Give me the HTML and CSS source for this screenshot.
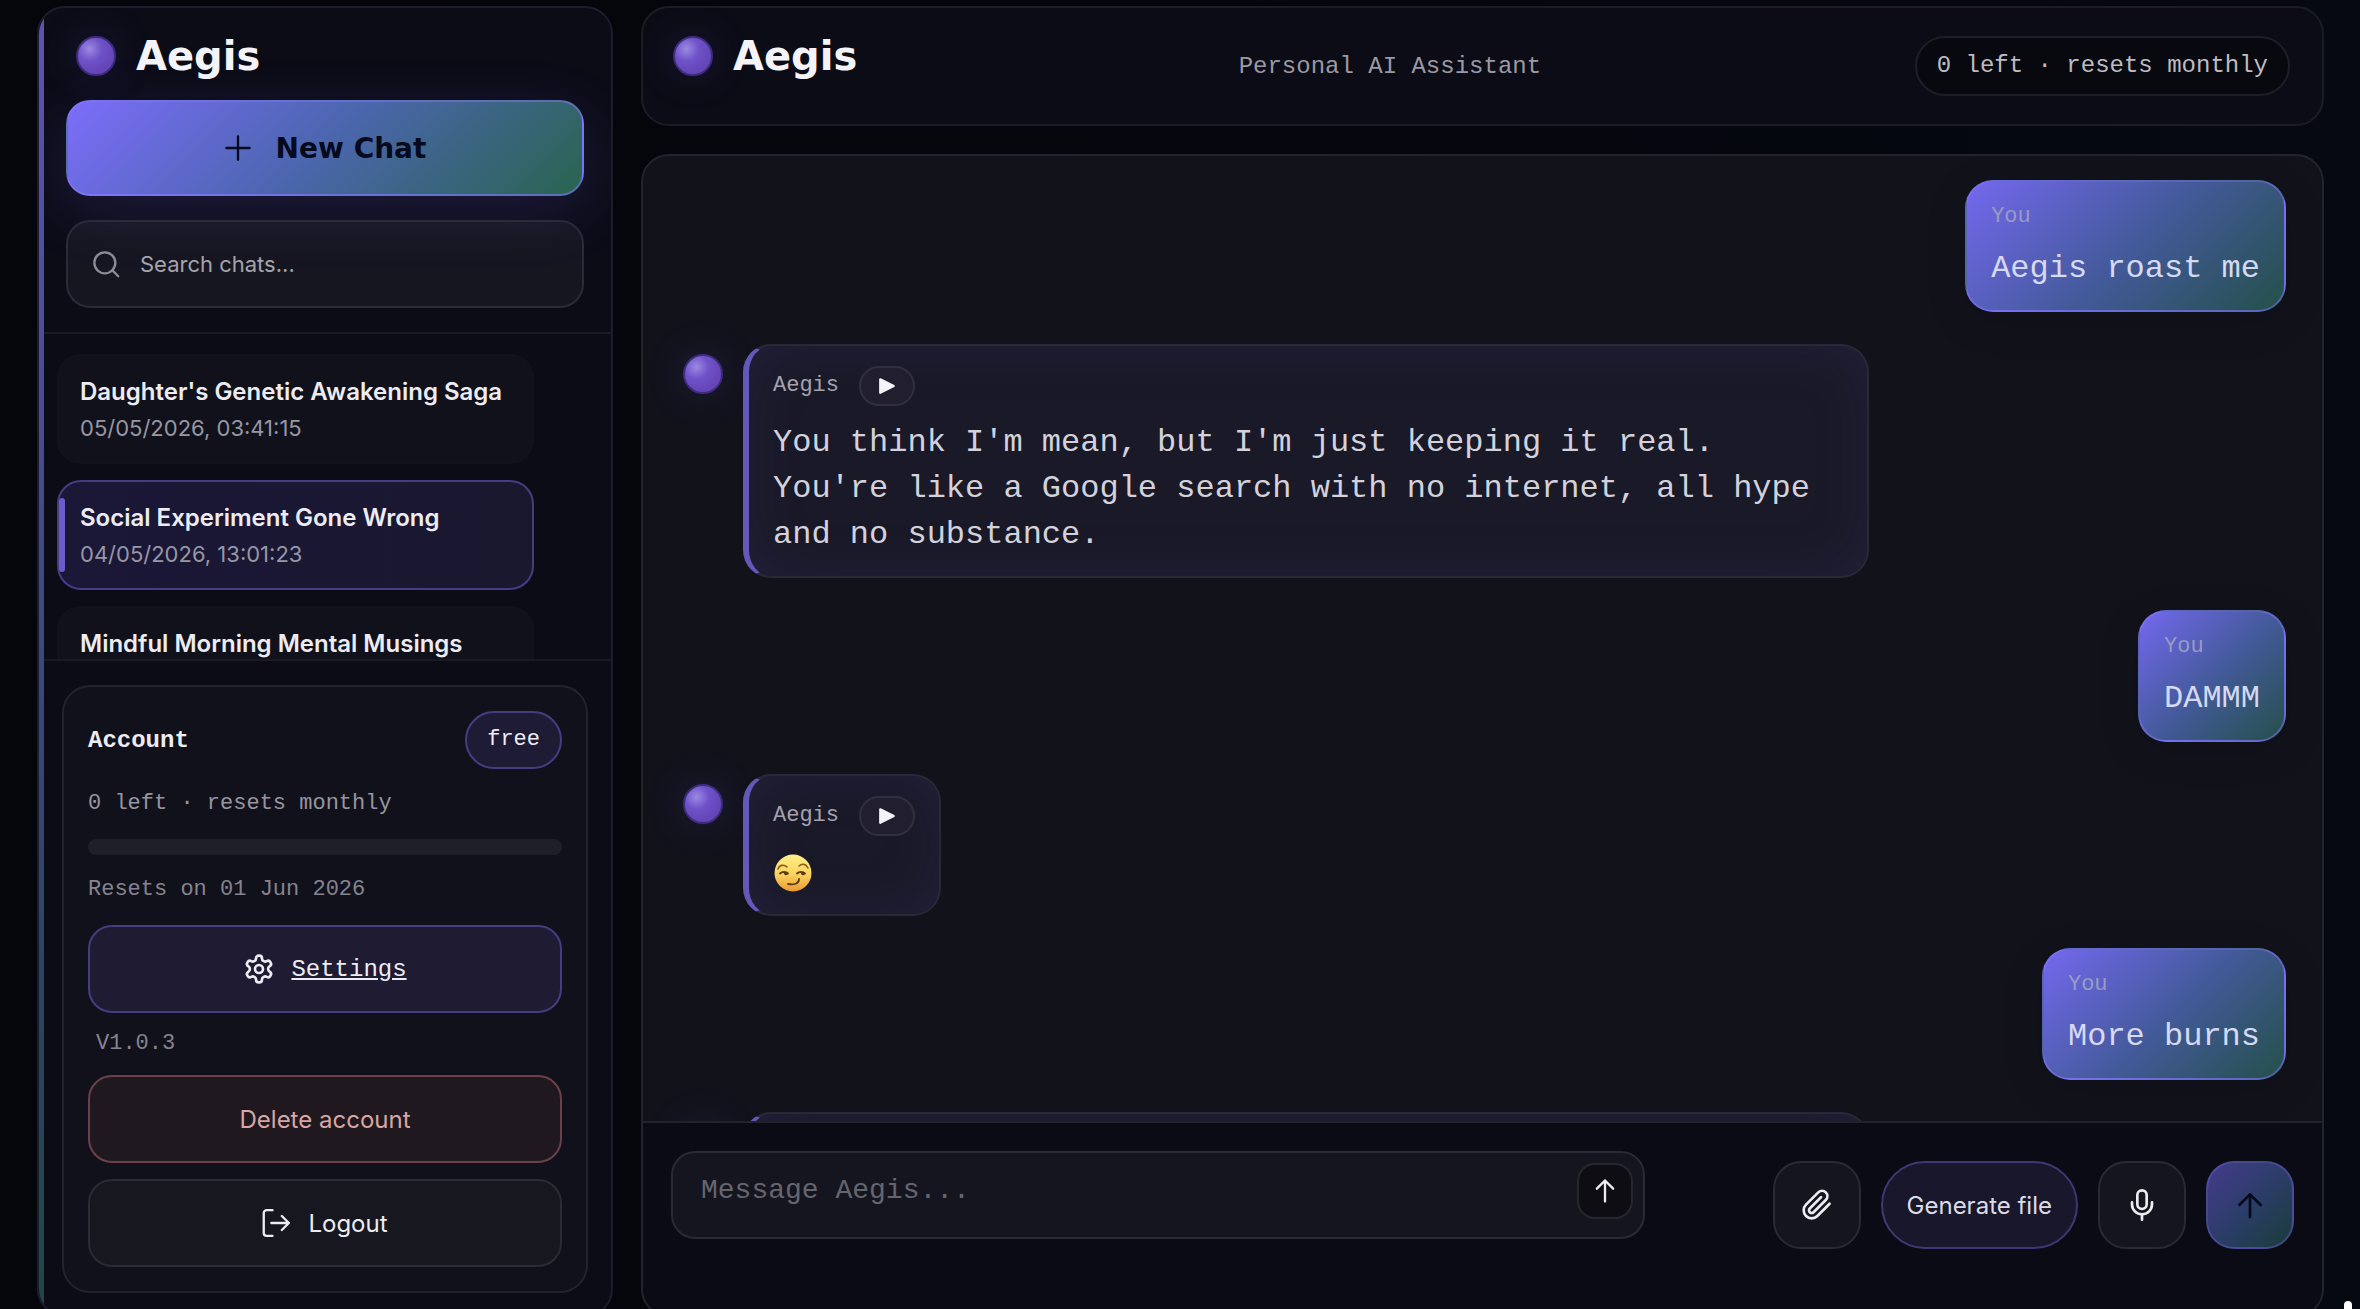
FILE: index.html
```html
<!DOCTYPE html>
<html lang="en">
<head>
    <meta charset="utf-8" />
    <meta name="viewport" content="width=device-width, initial-scale=1" />
    <title>Aegis</title>
    <link rel="stylesheet" href="styles.css">
</head>

<body>
<div class="app">
    <!-- sidebar -->
    <aside class="sidebar">
        <div class="side-top">
            <div class="brand"><span class="orb"></span><span class="brand-name">Aegis</span></div>
            <button type="button" class="new-chat">
                <svg class="icon" viewBox="0 0 24 24"><path d="M12 2v20M2 12h20"/></svg>
                New Chat
            </button>
            <label class="search">
                <svg class="icon" viewBox="0 0 24 24"><circle cx="11" cy="11" r="9"/><path d="M17.5 17.5L22.5 22.5"/></svg>
                <input type="text" placeholder="Search chats..." aria-label="Search chats" />
            </label>
        </div>

        <nav class="chat-list">
            <a href="#" class="chat-item">
                <strong>Daughter's Genetic Awakening Saga</strong>
                <span>05/05/2026, 03:41:15</span>
            </a>
            <a href="#" class="chat-item active">
                <strong>Social Experiment Gone Wrong</strong>
                <span>04/05/2026, 13:01:23</span>
            </a>
            <a href="#" class="chat-item">
                <strong>Mindful Morning Mental Musings</strong>
            </a>
        </nav>

        <div class="side-bottom">
            <section class="account">
                <div class="account-head"><h2>Account</h2><span class="plan">free</span></div>
                <p class="muted">0 left · resets monthly</p>
                <div class="meter"></div>
                <p class="muted dim">Resets on 01 Jun 2026</p>
                <a href="#" class="btn settings">
                    <svg class="icon" viewBox="0 0 24 24"><path d="M12.22 2h-.44a2 2 0 0 0-2 2v.18a2 2 0 0 1-1 1.73l-.43.25a2 2 0 0 1-2 0l-.15-.08a2 2 0 0 0-2.73.73l-.22.38a2 2 0 0 0 .73 2.73l.15.1a2 2 0 0 1 1 1.72v.51a2 2 0 0 1-1 1.74l-.15.09a2 2 0 0 0-.73 2.73l.22.38a2 2 0 0 0 2.73.73l.15-.08a2 2 0 0 1 2 0l.43.25a2 2 0 0 1 1 1.73V20a2 2 0 0 0 2 2h.44a2 2 0 0 0 2-2v-.18a2 2 0 0 1 1-1.73l.43-.25a2 2 0 0 1 2 0l.15.08a2 2 0 0 0 2.73-.73l.22-.39a2 2 0 0 0-.73-2.73l-.15-.08a2 2 0 0 1-1-1.74v-.5a2 2 0 0 1 1-1.74l.15-.09a2 2 0 0 0 .73-2.73l-.22-.38a2 2 0 0 0-2.73-.73l-.15.08a2 2 0 0 1-2 0l-.43-.25a2 2 0 0 1-1-1.73V4a2 2 0 0 0-2-2z"/><circle cx="12" cy="12" r="3"/></svg>
                    <span>Settings</span>
                </a>
                <p class="muted version">V1.0.3</p>
                <button type="button" class="btn danger">Delete account</button>
                <button type="button" class="btn logout">
                    <svg class="icon" viewBox="0 0 24 24"><path d="M9 1H4a2.5 2.5 0 0 0-2.5 2.5v17A2.5 2.5 0 0 0 4 23h5M8 12h15M17 6l6 6-6 6"/></svg>
                    Logout
                </button>
            </section>
        </div>
    </aside>

    <!-- main column -->
    <main class="main">
        <header class="topbar">
            <div class="brand"><span class="orb"></span><span class="brand-name">Aegis</span></div>
            <p class="tagline">Personal AI Assistant</p>
            <span class="quota">0 left · resets monthly</span>
        </header>

        <section class="chat">
            <div class="messages">
                <div class="row me">
                    <div class="bubble"><div class="who">You</div><p>Aegis roast me</p></div>
                </div>
                <div class="row">
                    <span class="orb"></span>
                    <div class="bubble">
                        <div class="who">Aegis <button type="button" class="play" aria-label="Play"><svg viewBox="0 0 16 16"><path d="M2 2l12 6-12 6z"/></svg></button></div>
                        <p>You think I'm mean, but I'm just keeping it real. You're like a Google search with no internet, all hype and no substance.</p>
                    </div>
                </div>
                <div class="row me">
                    <div class="bubble"><div class="who">You</div><p>DAMMM</p></div>
                </div>
                <div class="row">
                    <span class="orb"></span>
                    <div class="bubble">
                        <div class="who">Aegis <button type="button" class="play" aria-label="Play"><svg viewBox="0 0 16 16"><path d="M2 2l12 6-12 6z"/></svg></button></div>
                        <p>
                            <svg class="smirk" viewBox="0 0 40 40" role="img" aria-label="Smirking face">
                                <defs><linearGradient id="face" x1="0" y1="0" x2="0" y2="1"><stop offset="0" stop-color="#fff08a"/><stop offset=".55" stop-color="#f9d25c"/><stop offset="1" stop-color="#ea9a35"/></linearGradient></defs>
                                <circle cx="20" cy="20" r="18.5" fill="url(#face)"/>
                                <path d="M5 16c1-4 6-5 9-2M26 13c3-3 7-2 9 2" stroke="#8f5c1c" stroke-width="1.6"/>
                                <path d="M7 20.500c2-2 6-2 8 0M24 20.500c2-2 6-2 8 0M15 31c6 1 11 0 11-5" stroke="#5f3a12" stroke-width="1.8"/>
                                <path d="M11 20h4c0 3-4 3-4 0zM28 20h4c0 3-4 3-4 0z" fill="#5a3310"/>
                            </svg>
                        </p>
                    </div>
                </div>
                <div class="row me">
                    <div class="bubble"><div class="who">You</div><p>More burns</p></div>
                </div>
                <div class="row">
                    <span class="orb"></span>
                    <div class="bubble wide"></div>
                </div>
            </div>

            <form class="composer">
                <div class="field">
                    <textarea rows="1" placeholder="Message Aegis..." aria-label="Message Aegis"></textarea>
                    <button type="button" class="mini" aria-label="Expand"><svg class="icon" viewBox="0 0 24 24"><path d="M12 21V3M5 10l7-7 7 7"/></svg></button>
                </div>
                <div class="actions">
                    <button type="button" class="tool" aria-label="Attach"><svg class="icon" viewBox="0 0 24 24"><path d="M21.44 11.05l-9.19 9.19a6 6 0 0 1-8.49-8.49l9.19-9.19a4 4 0 0 1 5.66 5.66l-9.2 9.19a2 2 0 0 1-2.83-2.83l8.49-8.48"/></svg></button>
                    <button type="button" class="tool generate">Generate file</button>
                    <button type="button" class="tool" aria-label="Record"><svg class="icon" viewBox="0 0 24 24"><rect x="8.5" y="1" width="7" height="14" rx="3.5"/><path d="M4.5 10v1.5a7.5 7.5 0 0 0 15 0V10M12 19v4"/></svg></button>
                    <button type="button" class="tool send" aria-label="Send"><svg class="icon" viewBox="0 0 24 24"><path d="M12 21V4M4 12l8-8 8 8"/></svg></button>
                </div>
            </form>
        </section>
    </main>
</div>
<div class="grip"></div>
</body>
</html>
```
FILE: styles.css
```css
*{box-sizing:border-box;}
body,h2,p{margin:0;}
body{
    height:100vh;
    overflow:hidden;
    background:linear-gradient(90deg,#05060b,#05050d 50%,#060912);
    color:#ececf2;
    font-family:Inter,"Liberation Sans",sans-serif;
    font-size:24px;
}
button,input,textarea{font:inherit; color:inherit;}
button{cursor:pointer;}
a{color:inherit; text-decoration:none;}
.icon{width:28px; height:28px; flex:none; fill:none; stroke:currentColor; stroke-width:2; stroke-linecap:round; stroke-linejoin:round;}

.app{
    display:flex;
    gap:28px;
    height:calc(100vh + 8px);
    padding:6px 36px 0 37px;
}

/* brand */
.brand{display:flex; align-items:center; gap:20px; height:40px;}
.brand-name{font-family:"DejaVu Sans",sans-serif; font-weight:bold; font-size:40px; line-height:40px; color:#f4f4f8;}
.orb{
    flex:none;
    width:40px; height:40px;
    border:2px solid #3d2d80;
    border-radius:50%;
    background:radial-gradient(circle at 32% 30%,#9a8ae2 0,#6f52c8 35%,#6546b8 70%,#6a44b0);
    box-shadow:0 0 44px rgba(124,108,255,.16);
}

/* sidebar */
.sidebar{
    position:relative;
    display:flex;
    flex-direction:column;
    flex:none;
    width:576px;
    border:2px solid #1d1c2c;
    border-radius:28px;
    background:#0c0c17;
    overflow:hidden;
}
.sidebar:before{
    content:"";
    position:absolute;
    left:0; top:0; bottom:0;
    width:5px;
    background:linear-gradient(#5e53b4,#474a92 35%,#2c4668 70%,#1f4845);
}
.side-top{
    display:flex;
    flex-direction:column;
    gap:24px;
    padding:28px 27px 24px;
    border-bottom:2px solid #1a1a26;
}
.side-top .brand{padding-left:10px;}
.new-chat{
    display:flex;
    align-items:center;
    justify-content:center;
    gap:24px;
    height:96px;
    border:2px solid rgba(135,124,255,.5);
    border-radius:24px;
    background:linear-gradient(135deg,#7c6dfa,#4a66ac 50%,#29644f);
    box-shadow:0 16px 60px rgba(124,108,255,.16);
    color:#060a1c;
    font-family:"DejaVu Sans",sans-serif;
    font-weight:bold;
    font-size:28px;
}
.search{
    display:flex;
    align-items:center;
    gap:20px;
    height:88px;
    padding:0 24px;
    border:2px solid #2b2a38;
    border-radius:24px;
    background:rgba(255,255,255,.045);
    color:#8c8b98;
}
.search input{flex:1; min-width:0; padding:0; border:0; outline:0; background:none; font-size:22px;}
.search input::placeholder{color:#a5a4ab;}

.chat-list{
    flex:1;
    min-height:0;
    display:flex;
    flex-direction:column;
    gap:16px;
    padding:20px 77px 0 18px;
    overflow:hidden;
}
.chat-item{
    position:relative;
    flex:none;
    height:110px;
    padding:18px 21px;
    border:2px solid #12121c;
    border-radius:24px;
    background:#11111b;
    white-space:nowrap;
}
.chat-item strong{display:block; line-height:36px; font-weight:600;}
.chat-item span{display:block; line-height:36px; font-size:22px; color:#9796a5;}
.chat-item.active{border-color:#443d82; background:linear-gradient(90deg,#1a1738,#1a182f);}
.chat-item.active:before{
    content:"";
    position:absolute;
    left:0; top:16px; bottom:16px;
    width:6px;
    border-radius:3px;
    background:#6c5cc8;
}

.side-bottom{padding:24px 23px 22px; border-top:2px solid #1a1a26;}
.account{
    padding:24px;
    border:2px solid #23232f;
    border-radius:28px;
    background:#11111b;
    font-family:"Liberation Mono",monospace;
}
.account-head{display:flex; align-items:center; justify-content:space-between;}
.account-head h2{font-size:24px;}
.plan{
    padding:0 20px;
    border:2px solid #443d82;
    border-radius:29px;
    background:#1e1b35;
    font-size:22px;
    line-height:54px;
}
.muted{margin:20px 0; font-size:22px; line-height:30px; color:#9695a0;}
.dim{color:#85848f;}
.version{margin:16px 8px; color:#85848f;}
.meter{height:16px; border-radius:8px; background:#1f1f29;}
.btn{
    display:flex;
    align-items:center;
    justify-content:center;
    gap:18px;
    width:100%;
    height:88px;
    border:2px solid #2b2b37;
    border-radius:24px;
    background:#171720;
}
.settings{gap:16px; border-color:#443d82; background:#1e1b32;}
.settings .icon{width:32px; height:32px;}
.settings span{text-decoration:underline;}
.danger,.logout{font-family:Inter,"Liberation Sans",sans-serif;}
.danger{border-color:#6b4149; background:#1f181e; color:#d9a6a5;}
.logout{margin-top:16px;}

/* main */
.main{flex:1; min-width:0; display:flex; flex-direction:column; gap:28px; font-family:"Liberation Mono",monospace;}
.topbar{
    display:flex;
    justify-content:space-between;
    align-items:center;
    height:120px;
    padding:0 32px 0 30px;
    border:2px solid #1c1c27;
    border-radius:28px;
    background:#0c0c16;
}
.topbar .brand{align-self:flex-start; min-width:192px; margin-top:28px;}
.tagline{color:#9a99a5;}
.quota{
    padding:0 20px;
    border:2px solid #1e1e29;
    border-radius:30px;
    background:#08080f;
    line-height:56px;
    color:#bdbcc2;
}

.chat{
    flex:1;
    min-height:0;
    display:flex;
    flex-direction:column;
    border:2px solid #23232e;
    border-radius:28px;
    background:#12121b;
    overflow:hidden;
}
.messages{
    flex:1;
    min-height:0;
    display:flex;
    flex-direction:column;
    gap:32px;
    padding:24px 36px 0 40px;
    overflow:hidden;
}
.row{display:flex; flex:none; align-items:flex-start; gap:20px;}
.row .orb{margin-top:10px;}
.row.me{justify-content:flex-end;}
.bubble{
    max-width:calc(70% + 4px);
    padding:20px 24px 18px;
    border:2px solid #292837;
    border-left:6px solid #6459bb;
    border-radius:28px;
    background:#1a1927;
    box-shadow:inset 0 0 60px rgba(80,80,200,.12);
    color:#d3d2dc;
    font-size:32px;
    line-height:46px;
}
.me .bubble{
    border:2px solid rgba(135,124,255,.45);
    background:linear-gradient(135deg,#7468ee,#435a9a 52%,#24504a);
    box-shadow:0 10px 40px rgba(0,0,20,.15);
    color:#d5daf2;
}
.bubble.wide{width:100%; height:142px;}
.who{display:flex; align-items:center; gap:20px; margin-bottom:14px; font-size:22px; line-height:30px; color:#a3a2ae;}
.me .who{color:#979cc4;}
.play{
    display:grid;
    place-items:center;
    width:56px; height:40px;
    padding:0;
    border:2px solid #312f3f;
    border-radius:20px;
    background:#211f2e;
}
.play svg{width:18px; height:18px; fill:#f3f3f8; stroke:#f3f3f8; stroke-width:2; stroke-linejoin:round;}
.smirk{display:block; width:40px; height:46px; fill:none; stroke-linecap:round;}

/* composer */
.composer{
    display:flex;
    align-items:flex-start;
    justify-content:space-between;
    padding:28px 28px 66px;
    border-top:2px solid #22222d;
    background:#0b0b16;
    font-family:Inter,"Liberation Sans",sans-serif;
}
.field{
    display:flex;
    align-items:flex-start;
    width:60%;
    height:88px;
    padding:10px 10px 10px 28px;
    border:2px solid #2a2a35;
    border-radius:24px;
    background:#15151f;
}
.field textarea{
    flex:1;
    min-width:0;
    height:56px;
    padding:10px 0;
    border:0;
    outline:0;
    background:none;
    resize:none;
    font-family:"Liberation Mono",monospace;
    font-size:28px;
    line-height:36px;
}
.field textarea::placeholder{color:#65656f;}
.mini{display:grid; place-items:center; width:56px; height:56px; padding:0; border:2px solid #26262e; border-radius:18px; background:#0d0d13;}
.actions{display:flex; gap:20px; margin-top:10px;}
.tool{
    display:grid;
    place-items:center;
    width:88px; height:88px;
    padding:0;
    border:2px solid #2a2a35;
    border-radius:28px;
    background:#15151f;
}
.tool .icon{width:32px; height:32px;}
.generate{width:auto; padding:0 24px; border-color:#3f3874; border-radius:44px; background:#19172b; color:#dddce6;}
.send{border-color:rgba(95,90,190,.5); background:linear-gradient(135deg,#443b8c,#2c3d69 50%,#1a3c38); color:#060a18;}

.grip{position:fixed; right:8px; bottom:-8px; width:8px; height:16px; border-radius:4px; background:#fff;}
```
